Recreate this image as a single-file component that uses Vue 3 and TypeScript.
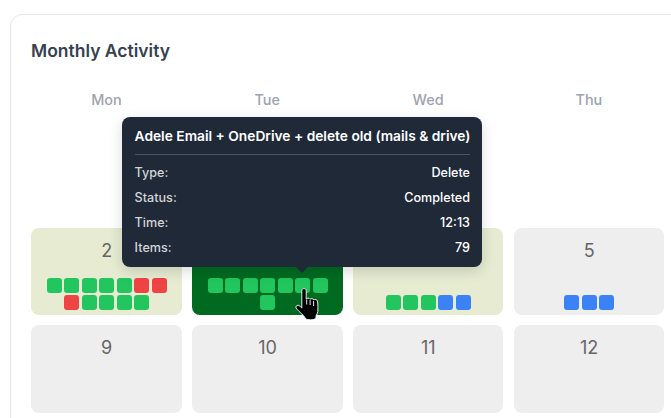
<script setup lang="ts">
type Day = {
  day: number
  tone?: 'soft' | 'strong'
  blocks?: string
  hovered?: number
}

const weekdays = ['Mon', 'Tue', 'Wed', 'Thu']

const days: (Day | null)[] = [
  null, null, null, null,
  { day: 2, tone: 'soft', blocks: 'gggggrrrgggg' },
  { day: 3, tone: 'strong', blocks: 'gggggggg', hovered: 5 },
  { day: 4, tone: 'soft', blocks: 'gggbb' },
  { day: 5, blocks: 'bbb' },
  { day: 9 },
  { day: 10 },
  { day: 11 },
  { day: 12 },
]

const details = [
  { label: 'Type:', value: 'Delete' },
  { label: 'Status:', value: 'Completed' },
  { label: 'Time:', value: '12:13' },
  { label: 'Items:', value: '79' },
]
</script>

<template>
  <section class="card">
    <h2>Monthly Activity</h2>

    <div class="weekdays">
      <span v-for="name in weekdays" :key="name">{{ name }}</span>
    </div>

    <div class="calendar">
      <template v-for="(item, i) in days" :key="i">
        <div v-if="!item" class="blank"></div>
        <div v-else class="cell" :class="item.tone">
          <span class="number">{{ item.day }}</span>
          <div v-if="item.blocks" class="blocks">
            <span
              v-for="(b, j) in item.blocks.split('')"
              :key="j"
              class="block"
              :class="b"
            >
              <template v-if="item.hovered === j">
                <div class="tooltip">
                  <div class="title">Adele Email + OneDrive + delete old (mails &amp; drive)</div>
                  <div v-for="row in details" :key="row.label" class="row">
                    <span>{{ row.label }}</span>
                    <strong>{{ row.value }}</strong>
                  </div>
                </div>
                <svg class="pointer" viewBox="0 0 26 34" width="26" height="34">
                  <path
                    d="M6.800 2.500C6.800 1.200 8 .6 9 .6s2.200 .6 2.200 1.900V11c.4-1 3.300-1.200 3.800.3.600-1 3.300-1 3.800.6.800-.8 3.400-.5 3.700 1.200.6 3 .5 7.300 .3 10.300-.2 1.800-1 3-1.700 4.400l-.3 2.800c-3 1.700-7.500 1.500-10.200.3-.7-2.100-2.400-3.400-3.800-5-1.400-1.500-4.700-4-5.800-6-.5-1.200.5-2.800 2.200-2.600 1.400.2 2.600 1.500 3.600 2.800z"
                    fill="#000"
                    stroke="#fff"
                    stroke-width="0.900"
                    stroke-linejoin="round"
                  />
                  <path d="M11.700 11.500v5M15.100 12v5M18.600 13v5" fill="none" stroke="#fff" stroke-width="0.900" />
                </svg>
              </template>
            </span>
          </div>
        </div>
      </template>
    </div>
  </section>
</template>

<style scoped>
.card {
  width: 800px;
  margin: 14px 0 0 10px;
  padding: 24px 20px;
  border: 1px solid #e5e7eb;
  border-radius: 12px;
  background: #fff;
  font-family: Inter, 'Liberation Sans', sans-serif;
}

h2 {
  margin: 0;
  font-size: 17.500px;
  line-height: 24px;
  font-weight: 600;
  color: #374151;
}

.weekdays,
.calendar {
  display: grid;
  grid-template-columns: repeat(4, 150.750px);
  column-gap: 10.100px;
}

.weekdays {
  margin: 27px 0 20.600px;
  text-align: center;
  font-size: 14.400px;
  line-height: 20px;
  font-weight: 500;
  color: #9ca3af;
}

.calendar {
  grid-auto-rows: 87.600px;
  row-gap: 9.600px;
}

.cell {
  display: flex;
  flex-direction: column;
  align-items: center;
  padding: 12px 8px 5px 8.600px;
  border-radius: 8px;
  background: #eeeeee;
}

.cell.soft {
  background: #e6ebd2;
}

.cell.strong {
  background: #006b20;
}

.number {
  font-size: 18px;
  line-height: 22px;
  color: #666;
}

.blocks {
  display: flex;
  flex-wrap: wrap;
  justify-content: center;
  gap: 2px 2.500px;
  margin-top: auto;
}

.block {
  position: relative;
  width: 15px;
  height: 15px;
  border-radius: 3px;
}

.block.g {
  background: #22c55e;
}

.block.r {
  background: #ef4444;
}

.block.b {
  background: #3b82f6;
}

.tooltip {
  position: absolute;
  left: 50%;
  bottom: calc(100% + 11.400px);
  z-index: 5;
  box-sizing: border-box;
  width: 360px;
  margin-left: -0.500px;
  padding: 11px 12px 7px 12.600px;
  border-radius: 8px;
  background: #1f2937;
  box-shadow: 0 4px 14px rgba(0, 0, 0, 0.15);
  transform: translateX(-50%);
  font-size: 12.600px;
  color: #d1d5db;
}

.tooltip::after {
  content: '';
  position: absolute;
  left: 50%;
  top: 100%;
  margin-left: -6px;
  border: 6px solid transparent;
  border-bottom: 0;
  border-top-color: #1f2937;
}

.title {
  margin-bottom: 5px;
  padding-bottom: 9px;
  border-bottom: 1px solid #4b5563;
  font-size: 13.750px;
  line-height: 17px;
  font-weight: 600;
  color: #fff;
  white-space: nowrap;
}

.row {
  display: flex;
  justify-content: space-between;
  line-height: 25px;
  font-weight: 500;
}

.row strong {
  font-weight: 500;
  color: #fff;
}

.pointer {
  position: absolute;
  left: 0;
  top: 10px;
  z-index: 6;
}
</style>

<style>
body {
  overflow: hidden;
}
</style>
